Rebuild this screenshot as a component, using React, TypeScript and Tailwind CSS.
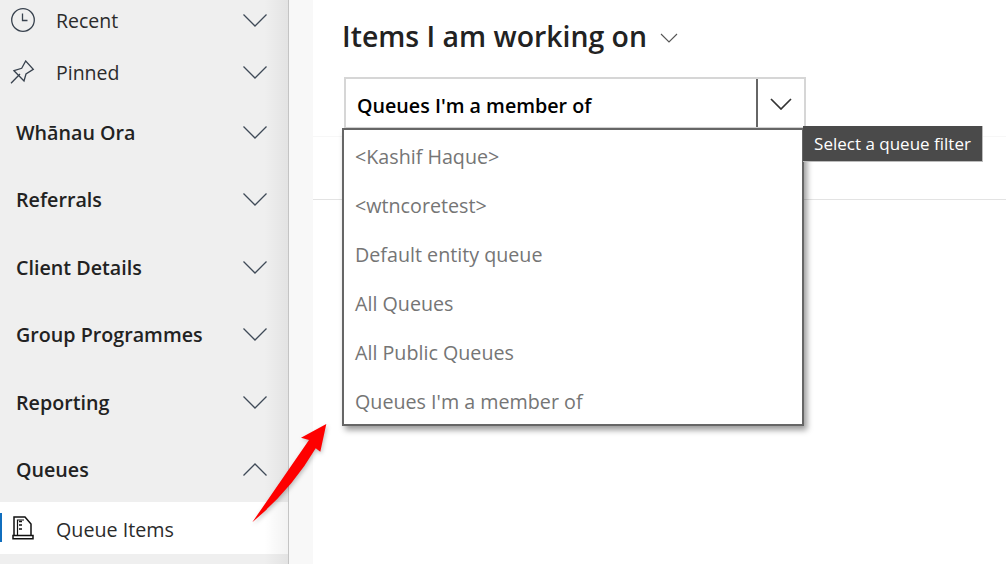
import React from "react";

const font = { fontFamily: '"Open Sans", "Noto Sans", sans-serif' };

function Chevron({ up = false, className = "" }: { up?: boolean; className?: string }) {
  return (
    <svg width="26" height="14" viewBox="0 0 26 14" fill="none" className={className}>
      <path d={up ? "M1.5 12.500 13 1 24.500 12.500" : "M1.500 0.500 13 12 24.500 0.500"} stroke="#3f4a57" strokeWidth="1.3" />
    </svg>
  );
}

function Clock() {
  return (
    <svg width="26" height="26" viewBox="0 0 26 26" fill="none" stroke="#38424e" strokeWidth="1.3">
      <circle cx="13" cy="12" r="11.300" />
      <path d="M12.500 5.500V12.500H17.500" />
    </svg>
  );
}

function Pin() {
  return (
    <svg width="26" height="26" viewBox="0 0 26 26" fill="none" stroke="#38424e" strokeWidth="1.3">
      <path d="M1 23.300 10 14" />
      <path d="M4 10.700 11.700 8.300 15.700 1 23.300 9.300 16 14 14 21Z" />
    </svg>
  );
}

function QueueIcon() {
  return (
    <svg width="22" height="24" viewBox="0 0 22 24" fill="none" stroke="#111" strokeWidth="1.500">
      <path d="M2 19.500V1H13L19 8V19.500" />
      <path d="M5.500 19.500V4H12" strokeWidth="1.200" />
      <path d="M1 19.500V22.800H21V19.500H1Z" />
      <path d="M7 5.500H10M7 9H10M7 13H10" strokeWidth="1.300" />
    </svg>
  );
}

const groups: { label: string; up?: boolean }[] = [
  { label: "Whānau Ora" },
  { label: "Referrals" },
  { label: "Client Details" },
  { label: "Group Programmes" },
  { label: "Reporting" },
  { label: "Queues", up: true },
];

const options = [
  "<Kashif Haque>",
  "<wtncoretest>",
  "Default entity queue",
  "All Queues",
  "All Public Queues",
  "Queues I'm a member of",
];

export default function App() {
  return (
    <div className="relative flex h-[564px] w-[1006px] overflow-hidden bg-white" style={font}>
      <aside className="relative w-[289px] shrink-0 overflow-hidden border-r border-[#c4c4c4] bg-[#efefef] text-[#2b2b2b]">
        <div className="-mt-[5px]">
          <div className="flex h-[52px] items-center pl-[10px] pr-[20px]">
            <Clock />
            <span className="ml-[20px] flex-1 text-[19.5px]">Recent</span>
            <Chevron />
          </div>
          <div className="flex h-[52px] items-center pl-[10px] pr-[20px]">
            <Pin />
            <span className="ml-[20px] flex-1 text-[19.5px]">Pinned</span>
            <Chevron />
          </div>
        </div>
        {groups.map((g) => (
          <div key={g.label} className="flex h-[67.5px] items-center pl-[16px] pr-[20px]">
            <span className="flex-1 text-[19.7px] font-semibold text-[#222]">{g.label}</span>
            <Chevron up={g.up} />
          </div>
        ))}
        <div className="relative -mt-[2px] flex h-[52px] items-center bg-white pl-[12px]">
          <span className="absolute left-0 top-[11px] h-[29px] w-[2px] bg-[#106ebe]" />
          <QueueIcon />
          <span className="ml-[22px] pt-[3px] text-[19.7px] text-[#2b2b2b]">Queue Items</span>
        </div>
        <div className="absolute inset-y-0 right-0 w-[24px] bg-linear-to-r from-transparent to-black/5" />
      </aside>

      <div className="w-[24px] shrink-0 bg-[#f8f8f8]" />

      <main className="relative min-w-0 flex-1">
        <div className="h-[137px] border-b border-[#f7f7f7] pl-[29px]">
          <div className="flex h-[74px] items-center">
            <h1 className="-mt-[2px] text-[28.4px] font-semibold leading-none text-[#222]">Items I am working on</h1>
            <svg width="18" height="10" viewBox="0 0 18 10" fill="none" className="ml-[13px] mt-[2px]">
              <path d="M1 1l8 8 8-8" stroke="#555" strokeWidth="1.100" />
            </svg>
          </div>
          <div className="ml-[2px] mt-[3px] flex h-[52px] w-[462px] border-2 border-[#d6d6d6] bg-white">
            <div className="flex flex-1 items-center border-r-2 border-[#666] pl-[11px] pt-[5px] text-[19.7px] font-semibold text-black">
              Queues I'm a member of
            </div>
            <div className="flex w-[46px] items-center justify-center pt-[2px]">
              <svg width="22" height="12" viewBox="0 0 22 12" fill="none">
                <path d="M1 1l10 10L21 1" stroke="#333" strokeWidth="1.700" />
              </svg>
            </div>
          </div>
        </div>
        <div className="h-[63px] border-b border-[#e3e3e3]" />

        <ul className="absolute left-[29px] top-[128px] h-[298px] w-[462px] border-2 border-[#666] bg-white py-[2px] shadow-[3px_4px_6px_rgba(0,0,0,0.4)]">
          {options.map((o) => (
            <li key={o} className="flex h-[49px] items-center pl-[11px] text-[19.700px] text-[#757575]">
              {o}
            </li>
          ))}
        </ul>

        <div className="absolute left-[490px] top-[126px] flex h-[36px] w-[180px] items-center justify-center border-b border-r border-[#bbb] bg-[#4a4a4a] text-[17px] text-white">
          Select a queue filter
        </div>
      </main>

      <svg width="90" height="115" viewBox="245 415 90 115" className="absolute left-[245px] top-[415px] drop-shadow-[1px_2px_2px_rgba(0,0,0,0.25)]">
        <path d="M326.300 424 301 437.700 309 440 252.300 522.300Q292 489 315.700 448.300L320.300 451.700Z" fill="#fe0000" />
      </svg>
    </div>
  );
}
